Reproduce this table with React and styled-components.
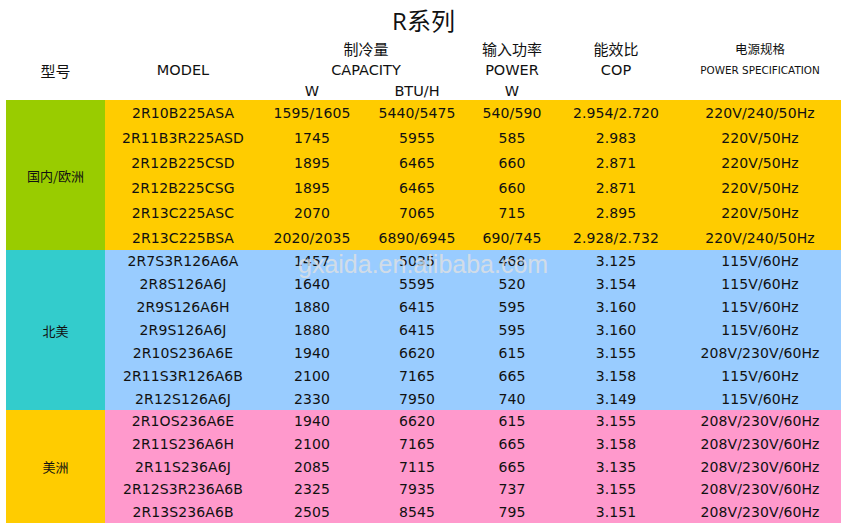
import React from 'react';
import styled, { createGlobalStyle } from 'styled-components';

const cols = '99px 156px 102px 108px 82px 126px 162px';

const groups = [
  {
    label: '国内/欧洲',
    labelColor: '#99cc00',
    rowColor: '#ffcc00',
    rowHeight: 25,
    rows: [
      ['2R10B225ASA', '1595/1605', '5440/5475', '540/590', '2.954/2.720', '220V/240/50Hz'],
      ['2R11B3R225ASD', '1745', '5955', '585', '2.983', '220V/50Hz'],
      ['2R12B225CSD', '1895', '6465', '660', '2.871', '220V/50Hz'],
      ['2R12B225CSG', '1895', '6465', '660', '2.871', '220V/50Hz'],
      ['2R13C225ASC', '2070', '7065', '715', '2.895', '220V/50Hz'],
      ['2R13C225BSA', '2020/2035', '6890/6945', '690/745', '2.928/2.732', '220V/240/50Hz'],
    ],
  },
  {
    label: '北美',
    labelColor: '#33cccc',
    rowColor: '#99ccff',
    rowHeight: 22.86,
    rows: [
      ['2R7S3R126A6A', '1457', '5035', '468', '3.125', '115V/60Hz'],
      ['2R8S126A6J', '1640', '5595', '520', '3.154', '115V/60Hz'],
      ['2R9S126A6H', '1880', '6415', '595', '3.160', '115V/60Hz'],
      ['2R9S126A6J', '1880', '6415', '595', '3.160', '115V/60Hz'],
      ['2R10S236A6E', '1940', '6620', '615', '3.155', '208V/230V/60Hz'],
      ['2R11S3R126A6B', '2100', '7165', '665', '3.158', '115V/60Hz'],
      ['2R12S126A6J', '2330', '7950', '740', '3.149', '115V/60Hz'],
    ],
  },
  {
    label: '美洲',
    labelColor: '#ffcc00',
    rowColor: '#ff99cc',
    rowHeight: 22.6,
    rows: [
      ['2R1OS236A6E', '1940', '6620', '615', '3.155', '208V/230V/60Hz'],
      ['2R11S236A6H', '2100', '7165', '665', '3.158', '208V/230V/60Hz'],
      ['2R11S236A6J', '2085', '7115', '665', '3.135', '208V/230V/60Hz'],
      ['2R12S3R236A6B', '2325', '7935', '737', '3.155', '208V/230V/60Hz'],
      ['2R13S236A6B', '2505', '8545', '795', '3.151', '208V/230V/60Hz'],
    ],
  },
];

function App() {
  return (
    <Page>
      <GlobalStyle />
      <Title>R系列</Title>
      <Header>
        <HeadCell $col="1" $row="2">型号</HeadCell>
        <HeadCell $col="2" $row="2" $latin>MODEL</HeadCell>
        <HeadCell $col="3 / span 2" $row="1">制冷量</HeadCell>
        <HeadCell $col="3 / span 2" $row="2" $latin>CAPACITY</HeadCell>
        <HeadCell $col="3" $row="3" $latin>W</HeadCell>
        <HeadCell $col="4" $row="3" $latin>BTU/H</HeadCell>
        <HeadCell $col="5" $row="1">输入功率</HeadCell>
        <HeadCell $col="5" $row="2" $latin>POWER</HeadCell>
        <HeadCell $col="5" $row="3" $latin>W</HeadCell>
        <HeadCell $col="6" $row="1">能效比</HeadCell>
        <HeadCell $col="6" $row="2" $latin>COP</HeadCell>
        <HeadCell $col="7" $row="1" $small>电源规格</HeadCell>
        <HeadCell $col="7" $row="2" $latin $small>POWER SPECIFICATION</HeadCell>
      </Header>
      <Table>
        {groups.map((g) => (
          <Group key={g.label}>
            <Label $bg={g.labelColor}>{g.label}</Label>
            <Rows $bg={g.rowColor}>
              {g.rows.map((r, i) => (
                <Row key={i} $h={g.rowHeight}>
                  {r.map((c, j) => (
                    <Cell key={j}>{c}</Cell>
                  ))}
                </Row>
              ))}
            </Rows>
          </Group>
        ))}
        <Watermark>gxaida.en.alibaba.com</Watermark>
      </Table>
    </Page>
  );
}
export default App;

const GlobalStyle = createGlobalStyle`
  body {
    margin: 0;
    background: #fff;
    font-family: "DejaVu Sans", "Noto Sans CJK SC", sans-serif;
    color: #111;
  }
`;

const Page = styled.div`
  width: 845px;
  height: 527px;
  padding: 0 4px 0 6px;
  box-sizing: border-box;
  overflow: hidden;
`;

const Title = styled.div`
  height: 38px;
  display: flex;
  align-items: center;
  justify-content: center;
  font-family: "Open Sans", "Noto Sans CJK SC", sans-serif;
  font-size: 24px;
  color: #111;
`;

const Header = styled.div`
  display: grid;
  grid-template-columns: ${cols};
  grid-template-rows: 21px 22px 19px;
`;

const HeadCell = styled.div`
  grid-column: ${(p) => p.$col};
  grid-row: ${(p) => p.$row};
  display: flex;
  align-items: center;
  justify-content: center;
  white-space: nowrap;
  font-family: ${(p) => (p.$latin ? '"DejaVu Sans", sans-serif' : '"Noto Sans CJK SC", sans-serif')};
  font-size: ${(p) => (p.$small ? (p.$latin ? '10.4px' : '12.5px') : p.$latin ? '14.5px' : '15px')};
  color: #111;
`;

const Table = styled.div`
  position: relative;
  width: 835px;
`;

const Group = styled.div`
  display: flex;
`;

const Label = styled.div`
  width: 99px;
  flex: none;
  background: ${(p) => p.$bg};
  display: flex;
  align-items: center;
  justify-content: center;
  font-family: "Noto Sans CJK SC", sans-serif;
  font-size: 13px;
`;

const Rows = styled.div`
  flex: 1;
  background: ${(p) => p.$bg};
  display: flex;
  flex-direction: column;
`;

const Row = styled.div`
  display: grid;
  grid-template-columns: 156px 102px 108px 82px 126px 162px;
  height: ${(p) => p.$h}px;
  align-items: center;
`;

const Cell = styled.div`
  text-align: center;
  white-space: nowrap;
  font-size: 14px;
  letter-spacing: 0.1px;
`;

const Watermark = styled.div`
  position: absolute;
  left: 292px;
  top: 152px;
  font-family: "Liberation Sans", sans-serif;
  font-size: 25px;
  line-height: 25px;
  color: rgba(225, 225, 225, 0.8);
  pointer-events: none;
`;
